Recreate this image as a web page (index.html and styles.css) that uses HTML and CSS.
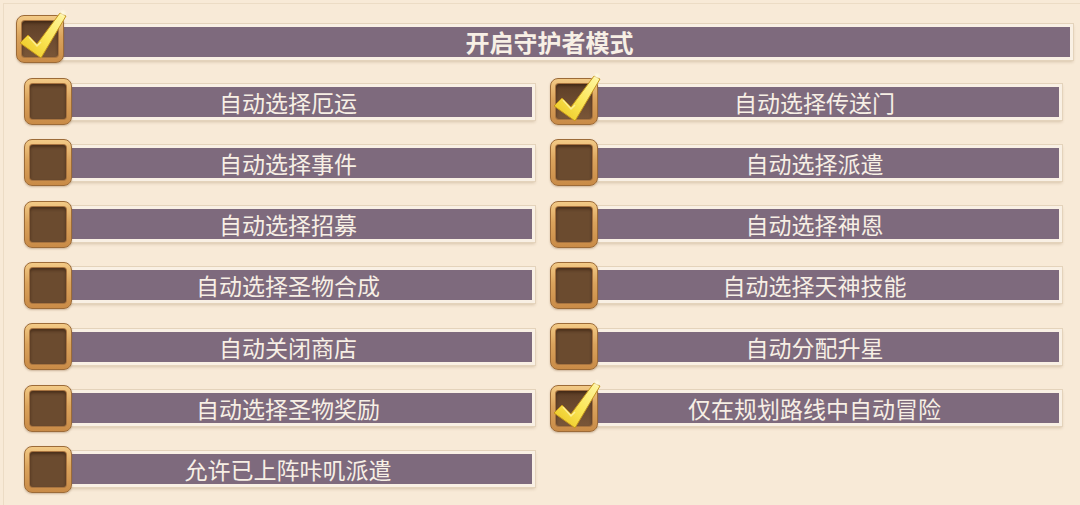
FILE: index.html
```html
<!DOCTYPE html>
<html lang="zh">
<head>
    <meta charset="UTF-8">
    <meta name="viewport" content="width=device-width, initial-scale=1.0">
    <title>守护者模式设置</title>
    <link rel="stylesheet" href="styles.css">
</head>
<body>
    <div class="panel">
        <div class="option master">
            <span class="box checked">
                <svg class="tick" viewBox="0 -6 56 54"><use href="#tick"/></svg>
            </span>
            <span class="bar">开启守护者模式</span>
        </div>

        <div class="options">
            <div class="option"><span class="box"></span><span class="bar">自动选择厄运</span></div>
            <div class="option">
                <span class="box checked"><svg class="tick" viewBox="0 -6 56 54"><use href="#tick"/></svg></span>
                <span class="bar">自动选择传送门</span>
            </div>
            <div class="option"><span class="box"></span><span class="bar">自动选择事件</span></div>
            <div class="option"><span class="box"></span><span class="bar">自动选择派遣</span></div>
            <div class="option"><span class="box"></span><span class="bar">自动选择招募</span></div>
            <div class="option"><span class="box"></span><span class="bar">自动选择神恩</span></div>
            <div class="option"><span class="box"></span><span class="bar">自动选择圣物合成</span></div>
            <div class="option"><span class="box"></span><span class="bar">自动选择天神技能</span></div>
            <div class="option"><span class="box"></span><span class="bar">自动关闭商店</span></div>
            <div class="option"><span class="box"></span><span class="bar">自动分配升星</span></div>
            <div class="option"><span class="box"></span><span class="bar">自动选择圣物奖励</span></div>
            <div class="option">
                <span class="box checked"><svg class="tick" viewBox="0 -6 56 54"><use href="#tick"/></svg></span>
                <span class="bar">仅在规划路线中自动冒险</span>
            </div>
            <div class="option"><span class="box"></span><span class="bar">允许已上阵咔叽派遣</span></div>
        </div>
    </div>

    <!-- shared check mark -->
    <svg width="0" height="0" class="defs">
        <defs>
            <linearGradient id="tickFill" x1="0" y1="1" x2="1" y2="0">
                <stop offset="0" stop-color="#e9c21c"/>
                <stop offset="0.5" stop-color="#fbe655"/>
                <stop offset="1" stop-color="#fff7a8"/>
            </linearGradient>
            <radialGradient id="spark">
                <stop offset="0" stop-color="#fffbe0"/>
                <stop offset="1" stop-color="#fffbe0" stop-opacity="0"/>
            </radialGradient>
            <g id="tick">
                <path d="M3 27 L11 19 L20 28 L43 -3 L49 0 L24 42 Z" fill="url(#tickFill)" stroke="#c5951c" stroke-width="1" stroke-linejoin="round"/>
                <path d="M12 21 L20 30 L24 26" fill="none" stroke="#fff6b0" stroke-width="1.5" opacity="0.7"/>
                <circle cx="46" cy="-3" r="4" fill="url(#spark)"/>
            </g>
        </defs>
    </svg>
</body>
</html>
```

FILE: styles.css
```css
body {
    margin: 0;
    background: #f8ead7;
    font-family: "Noto Sans CJK SC", "Noto Sans", sans-serif;
}
.panel {
    margin: 3px 0 0 3px;
    padding-top: 11px;
    border-top: 1px solid #ecdcc5;
    border-left: 1px solid #ecdcc5;
    height: 490px;
}
.option {
    display: flex;
    align-items: center;
    height: 47px;
}
.master {
    height: 48px;
    padding: 0 7px 0 12px;
}
.options {
    display: grid;
    grid-template-columns: 511px 512px;
    grid-auto-rows: 47px;
    column-gap: 15px;
    row-gap: 14.33px;
    margin-top: 15px;
    padding-left: 20px;
}
.box {
    position: relative;
    z-index: 1;
    flex: none;
    width: 48px;
    height: 47px;
    box-sizing: border-box;
    border: 1px solid #9c6b38;
    border-radius: 8px;
    background: linear-gradient(#f3ca86, #daa35c 45%, #c98b47);
    box-shadow: 0 1px 2px rgba(120, 80, 40, 0.35);
}
.master .box {
    height: 48px;
}
.box::before {
    content: "";
    position: absolute;
    top: 5px;
    left: 5px;
    right: 5px;
    bottom: 5px;
    border-radius: 3px;
    background: #6b4b2f;
    box-shadow: inset 0 2px 3px rgba(40, 20, 5, 0.5), 0 0 0 1px #a87440;
}
.box.checked::before {
    background: linear-gradient(#5e3f27, #7a5638);
}
.tick {
    position: absolute;
    left: 0;
    top: -6px;
    width: 56px;
    height: 54px;
    overflow: visible;
}
.bar {
    flex: 1;
    margin-left: -31px;
    height: 30px;
    border: 3px solid #f9f0e4;
    background: #7e6a7d;
    box-shadow: 0 0 0 1px #e4d3bb, 0 2px 3px rgba(140, 110, 70, 0.3);
    color: #f7efe5;
    font-size: 23px;
    line-height: 30px;
    text-align: center;
    white-space: nowrap;
}
.master .bar {
    margin-left: -38px;
    margin-top: 6px;
    font-size: 24px;
    font-weight: bold;
}
.defs {
    position: absolute;
}
```
